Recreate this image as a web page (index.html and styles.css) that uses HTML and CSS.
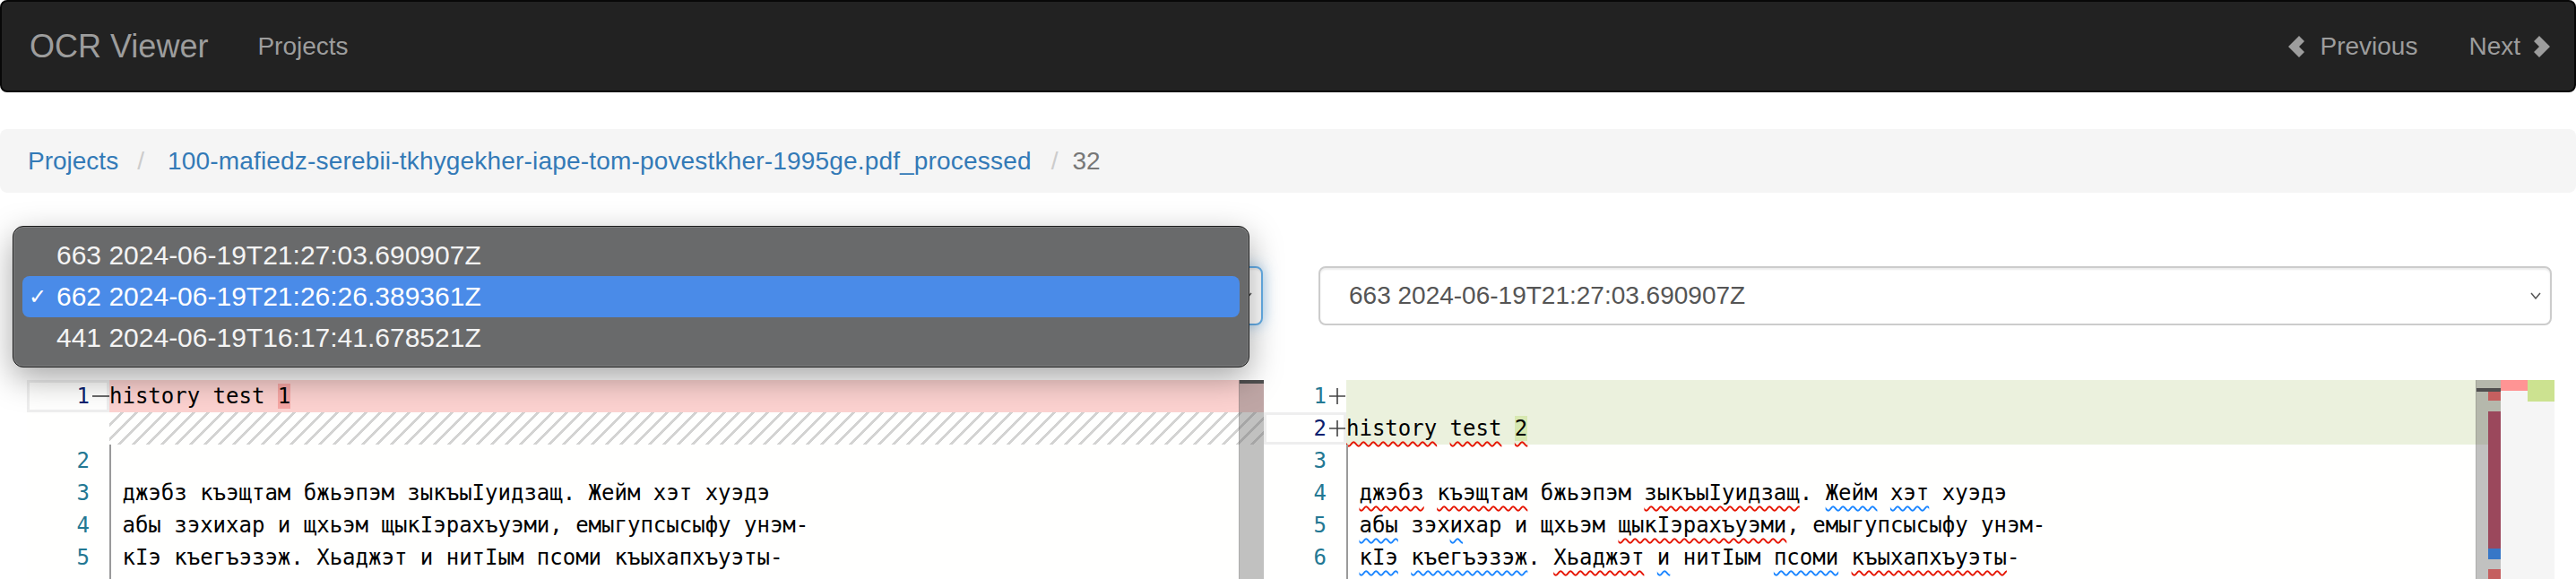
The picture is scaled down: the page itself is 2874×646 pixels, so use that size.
FILE: index.html
```html
<!DOCTYPE html>
<html>
<head>
<meta charset="utf-8">
<title>OCR Viewer</title>
<link rel="stylesheet" href="styles.css">
</head>
<body>
<nav class="navbar">
  <span class="brand">OCR Viewer</span>
  <a class="nav-link nav-main">Projects</a>
  <div class="nav-right">
    <a class="nav-link prev"><svg class="nchev" width="18" height="26" viewBox="0 0 18 26"><polygon points="0,13 12,1 18,7 12,13 18,19 12,25" fill="#9d9d9d"/></svg>Previous</a>
    <a class="nav-link next">Next<svg class="nchev" width="18" height="26" viewBox="0 0 18 26"><polygon points="18,13 6,1 0,7 6,13 0,19 6,25" fill="#9d9d9d"/></svg></a>
  </div>
</nav>

<ol class="breadcrumb">
  <li><a>Projects</a></li>
  <li class="sep">/</li>
  <li><a class="fname">100-mafiedz-serebii-tkhygekher-iape-tom-povestkher-1995ge.pdf_processed</a></li>
  <li class="sep sep2">/</li>
  <li class="current">32</li>
</ol>

<div class="selects">
  <div class="select focus"><span class="hidden-val">662 2024-06-19T21:26:26.389361Z</span><svg class="schev" width="12" height="8" viewBox="0 0 12 8"><polyline points="1,1 6,7 11,1" fill="none" stroke="#555" stroke-width="1.5"/></svg></div>
  <div class="select other"><span>663 2024-06-19T21:27:03.690907Z</span><svg class="schev" width="12" height="8" viewBox="0 0 12 8"><polyline points="1,1 6,7 11,1" fill="none" stroke="#555" stroke-width="1.5"/></svg></div>
</div>

<div class="diff">
  <div class="editor">
    <div class="row"><div class="gutter active"><span class="ln">1</span><span class="ind"><svg width="19" height="4" viewBox="0 0 19 4"><line x1="0" y1="2" x2="19" y2="2" stroke="#444" stroke-width="1.6"/></svg></span></div><div class="code del">history test <span class="del-ch">1</span></div></div>
    <div class="row"><div class="gutter"></div><div class="code hatch"></div></div>
    <div class="row"><div class="gutter"><span class="ln">2</span><span class="ind"></span></div><div class="code guide"> </div></div>
    <div class="row"><div class="gutter"><span class="ln">3</span><span class="ind"></span></div><div class="code guide"> джэбз къэщтам бжьэпэм зыкъыIуидзащ. Жейм хэт хуэдэ</div></div>
    <div class="row"><div class="gutter"><span class="ln">4</span><span class="ind"></span></div><div class="code guide"> абы зэхихар и щхьэм щыкIэрахъуэми, емыгупсысыфу унэм-</div></div>
    <div class="row"><div class="gutter"><span class="ln">5</span><span class="ind"></span></div><div class="code guide"> кIэ къегъэзэж. Хьаджэт и нитIым псоми къыхапхъуэты-</div></div>
    <div class="row"><div class="gutter"></div><div class="code guide"></div></div>
    <div class="scroll"><div class="cursor-mark"></div></div>
  </div>
  <div class="editor">
    <div class="row"><div class="gutter"><span class="ln">1</span><span class="ind"><svg width="18" height="18" viewBox="0 0 18 18"><path d="M0 9H18M9 0V18" stroke="#444" stroke-width="1.6" fill="none"/></svg></span></div><div class="code ins"></div></div>
    <div class="row"><div class="gutter active"><span class="ln">2</span><span class="ind"><svg width="18" height="18" viewBox="0 0 18 18"><path d="M0 9H18M9 0V18" stroke="#444" stroke-width="1.6" fill="none"/></svg></span></div><div class="code ins"><span class="sq-r">history</span> <span class="sq-r">test</span> <span class="ins-ch sq-r">2</span></div></div>
    <div class="row"><div class="gutter"><span class="ln">3</span><span class="ind"></span></div><div class="code guide"> </div></div>
    <div class="row"><div class="gutter"><span class="ln">4</span><span class="ind"></span></div><div class="code guide"> <span class="sq-r">джэбз</span> <span class="sq-r">къэщтам</span> бжьэпэм <span class="sq-r">зыкъыIуидзащ</span>. <span class="sq-b">Жейм</span> <span class="sq-b">хэт</span> хуэдэ</div></div>
    <div class="row"><div class="gutter"><span class="ln">5</span><span class="ind"></span></div><div class="code guide"> <span class="sq-b">абы</span> зэх<span class="sq-b">и</span>хар и щхьэм <span class="sq-r">щыкIэрахъуэми</span>, емыгупсысыфу унэм-</div></div>
    <div class="row"><div class="gutter"><span class="ln">6</span><span class="ind"></span></div><div class="code guide"> <span class="sq-b">кIэ</span> <span class="sq-b">къегъэзэж</span>. <span class="sq-r">Хьаджэт</span> <span class="sq-b">и</span> нитIым <span class="sq-b">псоми</span> <span class="sq-r">къыхапхъуэты</span>-</div></div>
    <div class="row"><div class="gutter"></div><div class="code guide"></div></div>
    <div class="scroll">
      <div class="mark m-red1"></div>
      <div class="mark m-maroon"></div>
      <div class="mark m-blue"></div>
      <div class="mark m-red2"></div>
      <div class="cursor-mark c2"></div>
    </div>
  </div>
  <div class="overview">
    <div class="ov-col"><div class="ov-del"></div></div>
    <div class="ov-col"><div class="ov-ins"></div></div>
  </div>
</div>

<div class="popup">
  <div class="item">663 2024-06-19T21:27:03.690907Z</div>
  <div class="item sel"><span class="check">✓</span>662 2024-06-19T21:26:26.389361Z</div>
  <div class="item">441 2024-06-19T16:17:41.678521Z</div>
</div>
</body>
</html>
```

FILE: styles.css
```css
* { box-sizing: border-box; }
html, body { margin: 0; padding: 0; background: #fff; }
body {
  font-family: "Liberation Sans", Arial, sans-serif;
  font-size: 28px;
  color: #333;
  width: 2874px;
  height: 646px;
  overflow: hidden;
  position: relative;
}

/* navbar */
.navbar {
  display: flex;
  align-items: center;
  height: 103px;
  background: #222;
  border: 2px solid #080808;
  border-radius: 8px;
}
.brand { color: #9d9d9d; font-size: 36px; margin-left: 31px; }
.nav-link { color: #9d9d9d; font-size: 28px; display: flex; align-items: center; text-decoration: none; }
.nav-main { margin-left: 55px; }
.nav-right { margin-left: auto; margin-right: 27px; display: flex; align-items: center; }
.prev .nchev { margin-right: 17px; }
.next { margin-left: 57px; }
.next .nchev { margin-left: 15px; }

/* breadcrumb */
.breadcrumb {
  display: flex;
  align-items: center;
  height: 71px;
  margin: 41px 0 0;
  padding: 0 31px;
  background: #f5f5f5;
  border-radius: 8px;
  list-style: none;
}
.breadcrumb a { color: #337ab7; text-decoration: none; }
.fname { letter-spacing: 0.18px; }
.sep { color: #ccc; margin: 0 26px 0 21px; }
.sep2 { margin: 0 16px 0 22px; }
.current { color: #777; }

/* selects */
.selects { display: flex; gap: 62px; margin-top: 82px; padding-left: 30px; }
.select {
  height: 66px;
  display: flex;
  align-items: center;
  padding: 0 10px 0 32px;
  border: 2px solid #ccc;
  border-radius: 8px;
  background: #fff;
  color: #555;
  font-size: 28px;
  box-shadow: inset 0 2px 2px rgba(0,0,0,.075);
}
.select.focus {
  width: 1379px;
  border-color: #66afe9;
  box-shadow: inset 0 2px 2px rgba(0,0,0,.075), 0 0 16px rgba(102,175,233,.6);
}
.hidden-val { visibility: hidden; }
.select.other { width: 1376px; }
.schev { margin-left: auto; }

/* diff editor */
.diff {
  display: flex;
  margin: 61px 0 0 30px;
  width: 2820px;
  height: 252px;
  font-family: "DejaVu Sans Mono", monospace;
  font-size: 24px;
}
.editor { position: relative; width: 1380px; background: #fffffe; }
.row { display: flex; height: 36px; line-height: 36px; }
.gutter { width: 92px; flex: none; display: flex; }
.gutter.active { box-shadow: inset 0 0 0 3px #eeeeee; }
.ln { width: 70px; text-align: right; color: #237893; }
.gutter.active .ln { color: #0b216f; }
.ind { width: 22px; display: flex; align-items: center; justify-content: center; padding-left: 2px; }
.code { flex: 1; white-space: pre; color: #000; }
.del { background: #fcd2d0; }
.del-ch { background: #f6a7a5; }
.ins { background: #ebf1dd; }
.ins-ch { background: #d7e8b1; }
.hatch {
  background-image: linear-gradient(-45deg, rgba(34,34,34,.2) 12.5%, transparent 12.5%, transparent 50%, rgba(34,34,34,.2) 50%, rgba(34,34,34,.2) 62.5%, transparent 62.5%, transparent 100%);
  background-size: 16px 16px;
}
.guide { box-shadow: inset 2px 0 0 #9a9a9a; }
.sq-r, .sq-b {
  text-decoration-line: underline;
  text-decoration-style: wavy;
  text-decoration-thickness: 2px;
  text-underline-offset: 6px;
  text-decoration-skip-ink: none;
}
.sq-r { text-decoration-color: #e51400; }
.sq-b { text-decoration-color: #1a85ff; }

.scroll {
  position: absolute;
  top: 0;
  right: 0;
  width: 28px;
  height: 100%;
  background: rgba(100,100,100,.4);
  border-left: 1px solid rgba(0,0,0,.1);
}
.cursor-mark { position: absolute; left: 0; right: 0; top: 0; height: 4px; background: #4f4f4f; }
.cursor-mark.c2 { top: 9px; }
.mark { position: absolute; left: 13px; width: 14px; }
.m-red1 { top: 11px; height: 12px; background: #c55f5f; }
.m-maroon { top: 35px; height: 153px; background: #9b485c; }
.m-blue { top: 188px; height: 12px; background: #3777c7; }
.m-red2 { top: 211px; height: 40px; background: #c55f5f; }

.overview { width: 60px; display: flex; background: #f5f5f5; }
.ov-col { width: 30px; }
.ov-del { height: 12px; background: #ff9494; }
.ov-ins { height: 24px; background: #cce290; }

/* native select popup */
.popup {
  position: absolute;
  left: 14px;
  top: 252px;
  width: 1380px;
  height: 158px;
  padding: 9px 10px;
  background: #696a6b;
  border: 1px solid #1c1c1c;
  border-radius: 12px;
  box-shadow: inset 0 0 0 1px rgba(255,255,255,.15), 0 12px 36px rgba(0,0,0,.35);
  font-family: "Liberation Sans", Arial, sans-serif;
  font-size: 30px;
  color: #f4f4f4;
}
.item {
  position: relative;
  height: 46px;
  display: flex;
  align-items: center;
  padding-left: 38px;
  border-radius: 8px;
}
.item.sel { background: #4a8be8; color: #fff; }
.check { position: absolute; left: 7px; font-family: "DejaVu Sans", sans-serif; font-size: 24px; }
```
